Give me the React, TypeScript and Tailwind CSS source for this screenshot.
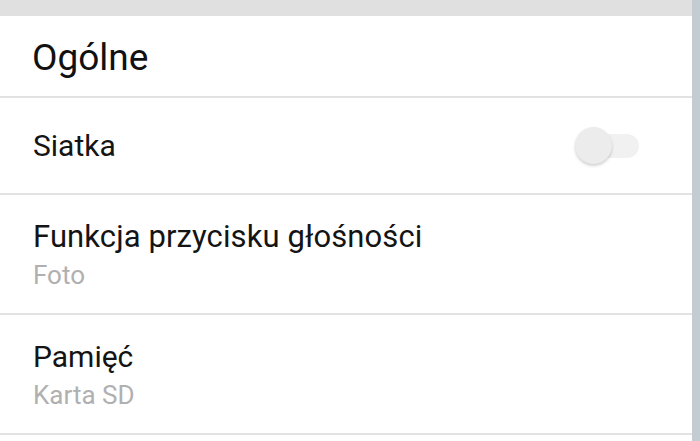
import React from "react";

const Divider = () => <div className="h-[2px] bg-[#e2e2e2]" />;

const Toggle = () => (
  <div className="relative w-[64px] h-[40px] mr-[53px]">
    <div className="absolute left-[10px] top-[8px] w-[54px] h-[24px] rounded-full bg-[#f1f1f1]" />
    <div className="absolute left-0 top-[1px] w-[37px] h-[37px] rounded-full bg-[#ececec] shadow-[0_2px_3px_rgba(0,0,0,0.18)]" />
  </div>
);

const Row = ({ title, value, big }: { title: string; value: string; big?: boolean }) => (
  <div className="h-[118px] flex flex-col pl-[33px] pt-[24px]">
    <div className={`${big ? "text-[31px] tracking-[0.1px]" : "text-[30px]"} leading-[36px] text-[#141414]`}>{title}</div>
    <div className="mt-[4px] text-[26px] leading-[32px] text-[#b0b0b0]">{value}</div>
  </div>
);

export default function App() {
  return (
    <div
      className="w-[700px] h-[441px] flex bg-white overflow-hidden"
      style={{ fontFamily: "Roboto, 'Noto Sans', sans-serif" }}
    >
      <div className="flex-1 flex flex-col">
        <div className="h-[16px] bg-[#e0e0e0]" />
        <div className="h-[80px] pl-[32px] pt-[20px]">
          <div className="text-[37px] leading-[44px] text-[#111]">Ogólne</div>
        </div>
        <Divider />
        <div className="h-[95px] flex items-center justify-between pl-[33px]">
          <span className="text-[30px] leading-[36px] text-[#141414]">Siatka</span>
          <Toggle />
        </div>
        <Divider />
        <Row title="Funkcja przycisku głośności" value="Foto" big />
        <Divider />
        <Row title="Pamięć" value="Karta SD" />
        <Divider />
      </div>
      <div className="w-[8px] bg-[#c3ccd1]" />
    </div>
  );
}
